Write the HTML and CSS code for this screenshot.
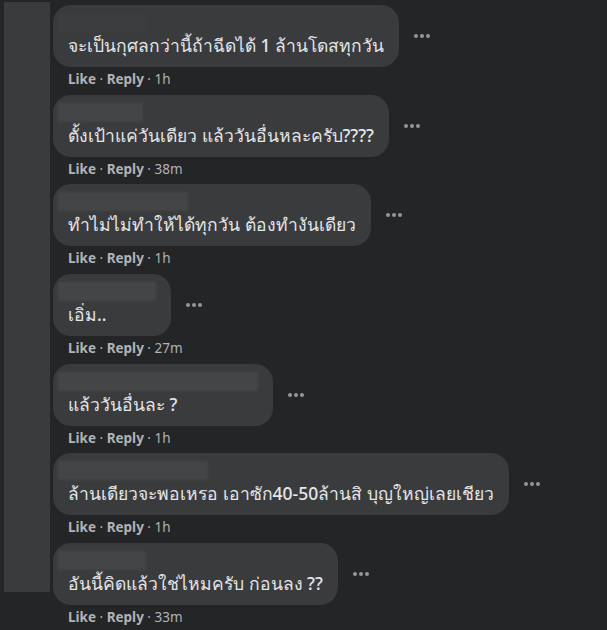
FILE: index.html
```html
<!DOCTYPE html>
<html lang="th">
<head>
<meta charset="UTF-8" />
<title>Comments</title>
<link rel="stylesheet" href="styles.css">
</head>
<body>

<div class="rail"></div>

<section class="comments">
  <div class="comment">
    <div class="line">
      <div class="bubble">
        <div class="name faint" style="width: 90px"></div>
        <div class="text">จะเป็นกุศลกว่านี้ถ้าฉีดได้ 1 ล้านโดสทุกวัน</div>
      </div>
      <div class="more"><i></i><i></i><i></i></div>
    </div>
    <div class="meta"><b>Like</b> · <b>Reply</b> · 1h</div>
  </div>

  <div class="comment">
    <div class="line">
      <div class="bubble">
        <div class="name" style="width: 85px"></div>
        <div class="text">ตั้งเป้าแค่วันเดียว แล้ววันอื่นหละครับ????</div>
      </div>
      <div class="more"><i></i><i></i><i></i></div>
    </div>
    <div class="meta"><b>Like</b> · <b>Reply</b> · 38m</div>
  </div>

  <div class="comment">
    <div class="line">
      <div class="bubble">
        <div class="name" style="width: 130px"></div>
        <div class="text">ทำไม่ไม่ทำให้ได้ทุกวัน ต้องทำงันเดียว</div>
      </div>
      <div class="more"><i></i><i></i><i></i></div>
    </div>
    <div class="meta"><b>Like</b> · <b>Reply</b> · 1h</div>
  </div>

  <div class="comment">
    <div class="line">
      <div class="bubble">
        <div class="name" style="width: 98px"></div>
        <div class="text">เอิ่ม..</div>
      </div>
      <div class="more"><i></i><i></i><i></i></div>
    </div>
    <div class="meta"><b>Like</b> · <b>Reply</b> · 27m</div>
  </div>

  <div class="comment">
    <div class="line">
      <div class="bubble">
        <div class="name" style="width: 200px"></div>
        <div class="text">แล้ววันอื่นละ ?</div>
      </div>
      <div class="more"><i></i><i></i><i></i></div>
    </div>
    <div class="meta"><b>Like</b> · <b>Reply</b> · 1h</div>
  </div>

  <div class="comment">
    <div class="line">
      <div class="bubble">
        <div class="name" style="width: 150px"></div>
        <div class="text">ล้านเดียวจะพอเหรอ เอาซัก40-50ล้านสิ บุญใหญ่เลยเชียว</div>
      </div>
      <div class="more"><i></i><i></i><i></i></div>
    </div>
    <div class="meta"><b>Like</b> · <b>Reply</b> · 1h</div>
  </div>

  <div class="comment">
    <div class="line">
      <div class="bubble">
        <div class="name" style="width: 88px"></div>
        <div class="text">อันนี้คิดแล้วใช่ไหมครับ ก่อนลง ??</div>
      </div>
      <div class="more"><i></i><i></i><i></i></div>
    </div>
    <div class="meta"><b>Like</b> · <b>Reply</b> · 33m</div>
  </div>
</section>

</body>
</html>
```

FILE: styles.css
```css
:root {
  --bg: #242526;
  --bubble: #3a3b3c;
  --text: #e4e6eb;
  --muted: #b0b3b8;
}
body {
  margin: 0;
  padding: 0;
  height: 630px;
  overflow: hidden;
  background: var(--bg);
  font-family: "Noto Sans", "Open Sans", sans-serif;
  display: flex;
  align-items: flex-start;
}
.rail {
  width: 46px;
  height: 590px;
  margin: 2px 0 0 4px;
  background: var(--bubble);
  flex-shrink: 0;
}
.comments {
  margin: 5px 0 0 3px;
  display: flex;
  flex-direction: column;
  gap: 3.67px;
}
.line {
  display: flex;
  align-items: center;
}
.bubble {
  background: var(--bubble);
  border-radius: 18px;
  padding: 8px 15px;
  height: 62px;
  box-sizing: border-box;
}
.name {
  height: 19px;
  margin: 0 0 1px -10px;
  background: #444546;
  filter: blur(1px);
}
.name.faint {
  background: #3c3d3e;
}
.text {
  color: var(--text);
  font-size: 17.5px;
  font-weight: 500;
  line-height: 25px;
  white-space: nowrap;
}
.more {
  display: flex;
  gap: 2px;
  margin-left: 15px;
}
.more i {
  width: 4px;
  height: 4px;
  border-radius: 50%;
  background: var(--muted);
  opacity: 0.8;
}
.meta {
  height: 24px;
  line-height: 24px;
  padding-left: 15px;
  font-size: 13.5px;
  color: var(--muted);
}
.meta b {
  font-weight: 700;
}
```
